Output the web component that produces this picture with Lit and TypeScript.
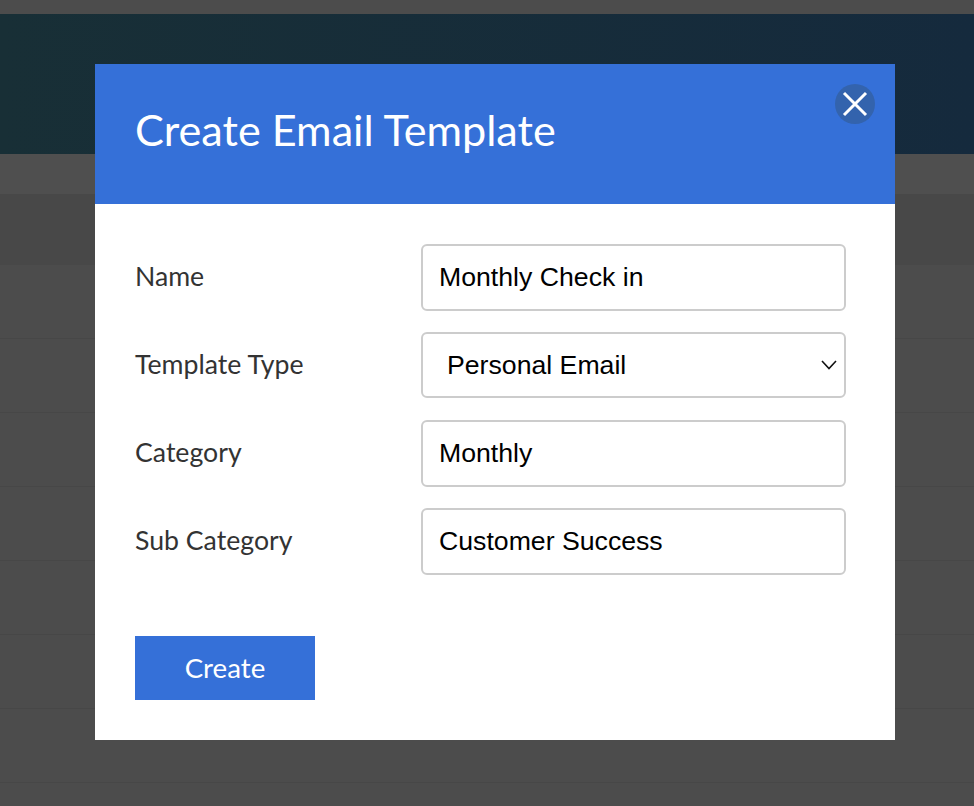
import { LitElement, html, css } from "lit";
import { customElement } from "lit/decorators.js";

@customElement("app-root")
export class AppRoot extends LitElement {
  static styles = css`
    :host { display: block; position: relative; width: 974px; height: 806px; overflow: hidden; background: #4c4c4c; }
    .page { display: flex; flex-direction: column; height: 806px; }
    .top { height: 14px; background: #4c4c4c; flex: none; }
    .hero { height: 140px; flex: none; background: linear-gradient(90deg, #182f36, #152a3d); }
    .strip { height: 40px; flex: none; background: #4f4f4f; }
    .tablehead { height: 71px; flex: none; background: #484848; }
    .row { height: 74px; box-sizing: border-box; flex: none; background: #4c4c4c; border-bottom: 1px solid #474747; }
    .modal { position: absolute; left: 95px; top: 64px; width: 800px; height: 676px; background: #fff; font-family: Lato, sans-serif; display: flex; flex-direction: column; }
    .head { height: 140px; flex: none; background: #3570d8; display: flex; align-items: center; padding: 0 0 10px 40px; box-sizing: border-box; position: relative; }
    h1 { margin: 0; font-size: 43.2px; font-weight: 400; color: #fff; line-height: 48px; }
    .close { position: absolute; left: 740px; top: 20px; width: 40px; height: 40px; border-radius: 50%; background: #3363ad; border: 0; padding: 0; display: flex; align-items: center; justify-content: center; }
    .body { padding: 40px 49px 40px 40px; display: flex; flex-direction: column; flex: 1; }
    .fields { display: grid; grid-template-columns: 286px 425px; grid-auto-rows: 66px; row-gap: 22px; align-items: start; }
    label { font-size: 26.67px; color: #333; line-height: 64px; }
    input, select { box-sizing: border-box; width: 425px; border: 2px solid #ccc; border-radius: 6px; background: #fff; font-family: "Liberation Sans", Arial, sans-serif; font-size: 26.67px; color: #000; outline: none; }
    input { height: 67px; padding: 0 16px; }
    .selectbox { position: relative; display: block; }
    select { height: 66px; appearance: none; padding: 0 24px; display: block; }
    .chev { position: absolute; right: 9px; top: 28px; pointer-events: none; }
    .create { margin-top: 62px; width: 180px; height: 64px; border: 0; background: #3570d8; color: #fff; font-family: Lato, sans-serif; font-size: 27.7px; padding: 0 0 1px; }
  `;

  render() {
    return html`
      <div class="page">
        <div class="top"></div>
        <div class="hero"></div>
        <div class="strip"></div>
        <div class="tablehead"></div>
        ${Array.from({ length: 8 }, () => html`<div class="row"></div>`)}
      </div>
      <div class="modal">
        <div class="head">
          <h1>Create Email Template</h1>
          <button class="close" aria-label="Close">
            <svg width="26" height="26" viewBox="0 0 26 26"><path d="M2 2L24 24M24 2L2 24" stroke="#fff" stroke-width="3" fill="none"/></svg>
          </button>
        </div>
        <div class="body">
          <div class="fields">
            <label>Name</label>
            <input .value=${"Monthly Check in"} />
            <label>Template Type</label>
            <div class="selectbox">
              <select><option>Personal Email</option></select>
              <svg class="chev" width="16" height="10" viewBox="0 0 16 10"><path d="M1 1L8 8.5L15 1" stroke="#111" stroke-width="1.6" fill="none"/></svg>
            </div>
            <label>Category</label>
            <input .value=${"Monthly"} />
            <label>Sub Category</label>
            <input .value=${"Customer Success"} />
          </div>
          <button class="create">Create</button>
        </div>
      </div>
    `;
  }
}
